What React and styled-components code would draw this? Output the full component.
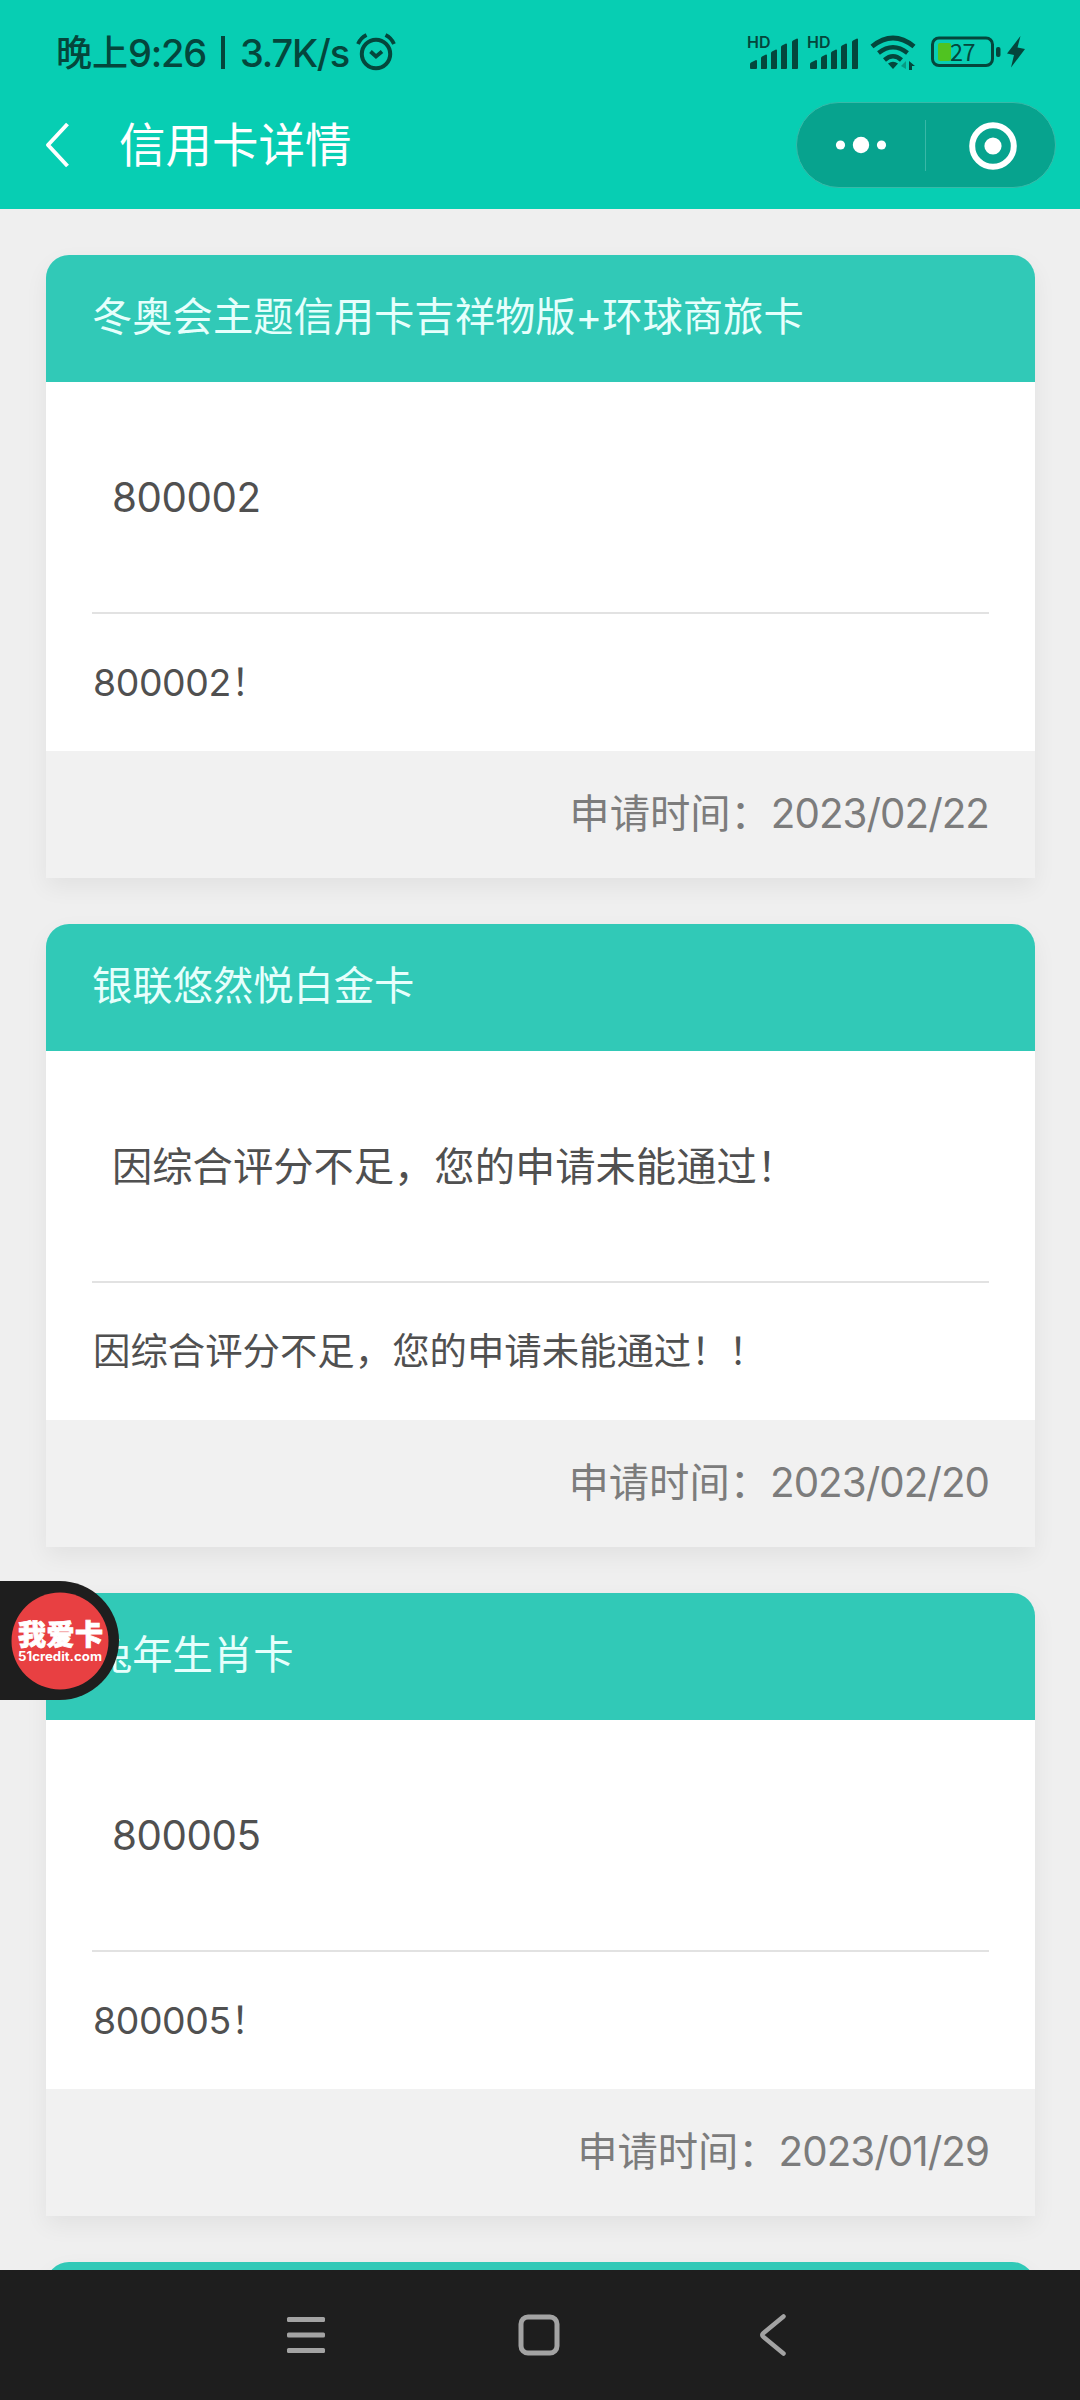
import React from 'react';
import styled, { createGlobalStyle } from 'styled-components';

const cards = [
  {
    id: 1,
    name: '冬奥会主题信用卡吉祥物版+环球商旅卡',
    status: '800002',
    remark: '800002！',
    date: '2023/02/22',
  },
  {
    id: 2,
    name: '银联悠然悦白金卡',
    status: '因综合评分不足，您的申请未能通过！',
    remark: '因综合评分不足，您的申请未能通过！！',
    date: '2023/02/20',
  },
  {
    id: 3,
    name: '兔年生肖卡',
    status: '800005',
    remark: '800005！',
    date: '2023/01/29',
  },
];

const SignalIcon = () => (
  <svg width='50' height='34' viewBox='0 0 50 34'>
    <text
      x='-1'
      y='12'
      fontFamily='Inter, sans-serif'
      fontSize='16'
      fontWeight='600'
      fill='#04463c'
    >
      HD
    </text>
    <g fill='#04463c'>
      <path d='M2 32v-4q0-1 1-1.500l5-2.500q1 0 1 1v7q0 1-1 1H3q-1 0-1-1z' />
      <path d='M13 33V22q0-1 1-1.500l4-2q1 0 1 1V32q0 1-1 1z' />
      <path d='M23 33V17q0-1 1-1.500l4-2q1 0 1 1V32q0 1-1 1z' />
      <path d='M33 33V11q0-1 1-1.500l4-2q1 0 1 1V32q0 1-1 1z' />
      <path d='M44 33V6q0-1 1-1.500l4-2q1 0 1 1V32q0 1-1 1z' />
    </g>
  </svg>
);

const Home = () => (
  <Page>
    <TopBar>
      <StatusBar>
        <StatusLeft>
          <Clock>晚上</Clock>
          <ClockDigits $width={76}>9:26</ClockDigits>
          <Separator />
          <ClockDigits $width={110}>3.7K/s</ClockDigits>
          <svg width='40' height='38' viewBox='0 0 40 38' fill='none' stroke='#04463c'>
            <circle cx='20' cy='21' r='14.200' strokeWidth='4' />
            <path d='M14.500 18.500l5.500 5 6-5' strokeWidth='3.800' />
            <path d='M2 11Q4.500 5 10.500 2M38 11Q35.500 5 29.500 2' strokeWidth='3.800' />
          </svg>
        </StatusLeft>
        <StatusRight>
          <SignalIcon />
          <SignalIcon />
          <WifiIcon width='46' height='34' viewBox='0 0 46 34' fill='none' stroke='#04463c'>
            <path d='M2 10.500Q23-6.500 44 10.500' strokeWidth='4.800' />
            <path d='M8.500 17Q23 5.500 37.500 17' strokeWidth='4.500' />
            <path d='M14.500 24Q23 16.500 31.500 24' strokeWidth='4.500' />
            <path d='M18 27.500q5-3.500 10 0l-5 5.500z' fill='#04463c' stroke='none' />
            <path d='M31 30l5-5v8z' fill='#079a83' stroke='none' />
            <path d='M39 34V25l6 5h-3v4z' fill='#04463c' stroke='none' />
          </WifiIcon>
          <BatteryIcon width='70' height='32' viewBox='0 0 70 32'>
            <rect x='1.500' y='2' width='60' height='27.500' rx='6.500' fill='none' stroke='#04463c' strokeWidth='3' />
            <rect x='7' y='7' width='13' height='18' rx='2' fill='#50c321' />
            <rect x='65' y='11' width='4.500' height='10' rx='2' fill='#04463c' />
            <text
              x='19'
              y='24.500'
              fontFamily='"Noto Sans CJK SC", sans-serif'
              fontSize='23.500'
              letterSpacing='-0.5'
              fill='#04463c'
            >
              27
            </text>
          </BatteryIcon>
          <svg width='18' height='32' viewBox='0 0 18 32' fill='#04463c'>
            <path d='M13.500 0L0 17.500l7 1.500-3 12.500L18 13l-7.500-1.500z' />
          </svg>
        </StatusRight>
      </StatusBar>
      <NavBar>
        <BackIcon width='26' height='46' viewBox='0 0 26 46' fill='none' stroke='#fff'>
          <path d='M22.500 2L3 23l19.500 21' strokeWidth='4' strokeLinejoin='round' />
        </BackIcon>
        <PageTitle>信用卡详情</PageTitle>
        <Capsule>
          <CapsuleButton $width={128}>
            <svg width='52' height='18' viewBox='0 0 52 18' fill='#fff'>
              <circle cx='5.500' cy='9' r='4.600' />
              <circle cx='26' cy='9' r='8.200' />
              <circle cx='46.500' cy='9' r='4.600' />
            </svg>
          </CapsuleButton>
          <CapsuleLine />
          <CapsuleButton $close $width={129}>
            <svg width='48' height='48' viewBox='0 0 48 48'>
              <circle cx='24' cy='24' r='20.800' fill='none' stroke='#fff' strokeWidth='6' />
              <circle cx='24' cy='24' r='8.600' fill='#fff' />
            </svg>
          </CapsuleButton>
        </Capsule>
      </NavBar>
    </TopBar>
    <CardList>
      {cards.map((card) => (
        <Card key={card.id}>
          <CardHeader>{card.name}</CardHeader>
          <CardBody>
            <Status $code={/^\d/.test(card.status)}>{card.status}</Status>
            <Remark $code={/^\d/.test(card.remark)}>{card.remark}</Remark>
          </CardBody>
          <CardFooter>
            <span>申请时间：</span>
            <ApplyDate>{card.date}</ApplyDate>
          </CardFooter>
        </Card>
      ))}
      <Card>
        <CardHeader />
      </Card>
    </CardList>
    <BottomBar>
      <svg width='40' height='42' viewBox='0 0 40 42' fill='#a3a3a3'>
        <rect x='1' y='3' width='38' height='5' rx='1.500' />
        <rect x='1' y='18.500' width='38' height='5' rx='1.500' />
        <rect x='1' y='34' width='38' height='5' rx='1.500' />
      </svg>
      <svg width='42' height='42' viewBox='0 0 42 42' fill='none' stroke='#a3a3a3'>
        <rect x='3' y='3' width='36' height='36' rx='7' strokeWidth='5' />
      </svg>
      <BottomBack width='28' height='42' viewBox='0 0 28 42' fill='none' stroke='#a3a3a3'>
        <path d='M24.500 2.500L4.500 19q-2.500 2 0 4l20 16.500' strokeWidth='4.500' strokeLinecap='round' />
      </BottomBack>
    </BottomBar>
    <FloatBall>
      <svg width='98' height='98' viewBox='0 0 98 98' fontWeight='900' fill='#fff'>
        <circle cx='49' cy='49' r='48.500' fill='#e84042' />
        <text
          x='7'
          y='53'
          fontFamily='"Noto Sans CJK SC", sans-serif'
          fontSize='28'
          textLength='85'
          stroke='#fff'
          strokeWidth='0.800'
        >
          我爱卡
        </text>
        <text
          x='7'
          y='69'
          fontFamily='Inter, sans-serif'
          fontSize='12.500'
          fontWeight='700'
          textLength='84'
          lengthAdjust='spacingAndGlyphs'
        >
          51credit.com
        </text>
      </svg>
    </FloatBall>
  </Page>
);

const App = () => (
  <>
    <GlobalStyle />
    <Home />
  </>
);

export default App;

const GlobalStyle = createGlobalStyle`
  * {
    box-sizing: border-box;
  }
  body {
    margin: 0;
    font-family: Inter, 'Noto Sans CJK SC', sans-serif;
  }
  svg {
    display: block;
    flex-shrink: 0;
    overflow: visible;
  }
`;

const Page = styled.div`
  position: relative;
  display: flex;
  flex-direction: column;
  width: 1080px;
  height: 2400px;
  overflow: hidden;
  background: #efefef;
`;

const TopBar = styled.header`
  flex: none;
  height: 209px;
  background: #07ceb3;
`;

const StatusBar = styled.div`
  display: flex;
  justify-content: space-between;
  height: 102px;
  padding: 0 55px 0 56px;
  color: #04463c;
`;

const StatusLeft = styled.div`
  display: flex;
  align-items: center;
  height: 104px;
  white-space: nowrap;
`;

const Clock = styled.span`
  padding-top: 2px;
  font-size: 36px;
  font-weight: 500;
  line-height: 44px;
`;

const ClockDigits = styled.span`
  width: ${(props) => props.$width}px;
  margin-right: ${(props) => (props.$width > 100 ? '6px' : '3px')};
  padding-top: 2px;
  font-size: 38px;
  font-weight: 500;
  line-height: 44px;
  letter-spacing: -1.2px;
`;

const Separator = styled.i`
  width: 4px;
  height: 33px;
  margin: 0 15px 0 14px;
  background: #04463c;
`;

const StatusRight = styled.div`
  display: flex;
  gap: 10px;
  padding-top: 36px;
`;

const WifiIcon = styled.svg`
  margin-left: 2px;
`;

const BatteryIcon = styled.svg`
  margin-left: 5px;
  margin-right: -4px;
`;

const NavBar = styled.div`
  display: flex;
  align-items: center;
  height: 86px;
  padding-left: 45px;
  padding-right: 24px;
`;

const BackIcon = styled.svg`
  margin-right: 48px;
`;

const PageTitle = styled.h1`
  margin: 0;
  color: #fff;
  font-size: 46.5px;
  font-weight: 400;
  line-height: 60px;
`;

const Capsule = styled.div`
  display: flex;
  align-items: center;
  width: 260px;
  height: 86px;
  margin-left: auto;
  border: 1px solid #38b9a8;
  border-radius: 43px;
  background: #07a38e;
`;

const CapsuleButton = styled.div`
  display: flex;
  justify-content: center;
  width: ${(props) => props.$width}px;
  padding-right: ${(props) => (props.$close ? '0' : '1px')};
  padding-left: ${(props) => (props.$close ? '4px' : '0')};
  padding-top: ${(props) => (props.$close ? '2px' : '0')};
`;

const CapsuleLine = styled.i`
  width: 1px;
  height: 51px;
  background: #39b8a7;
`;

const CardList = styled.main`
  display: flex;
  flex: 1;
  flex-direction: column;
  gap: 46px;
  min-height: 0;
  padding: 46px 45px 0 46px;
  overflow: hidden;
`;

const Card = styled.section`
  flex: none;
  border-radius: 23px 23px 0 0;
  box-shadow: 0 9px 23px rgba(0, 0, 0, 0.06);
`;

const CardHeader = styled.div`
  height: 127px;
  padding: 0 46px;
  border-radius: 23px 23px 0 0;
  background: #31c9b7;
  color: #e6fffc;
  font-size: 40.3px;
  line-height: 124px;
`;

const CardBody = styled.div`
  padding: 0 46px;
  background: #fff;
  color: #505050;
`;

const Status = styled.div`
  height: 232px;
  padding-left: 20px;
  border-bottom: 2px solid #e2e2e2;
  font-size: 40.3px;
  line-height: 232px;
  letter-spacing: ${(props) => (props.$code ? '-0.4px' : '0')};
`;

const Remark = styled.div`
  height: 137px;
  padding-left: 1px;
  font-size: 37.4px;
  line-height: 137px;
  letter-spacing: ${(props) => (props.$code ? '-0.4px' : '0')};
`;

const CardFooter = styled.div`
  display: flex;
  justify-content: flex-end;
  height: 127px;
  padding-right: 46px;
  background: #f1f1f1;
  color: #7c7c7c;
  font-size: 40.3px;
  line-height: 125px;
`;

const ApplyDate = styled.span`
  letter-spacing: -0.95px;
`;

const BottomBar = styled.footer`
  display: flex;
  flex: none;
  align-items: center;
  gap: 192px;
  height: 130px;
  padding-left: 286px;
  background: #1e1e1e;
`;

const BottomBack = styled.svg`
  margin-left: 7px;
`;

const FloatBall = styled.div`
  position: absolute;
  top: 1581px;
  left: 0;
  display: flex;
  align-items: center;
  width: 119px;
  height: 119px;
  padding-left: 11px;
  border-radius: 0 60px 60px 0;
  background: #1e1e1e;
`;
